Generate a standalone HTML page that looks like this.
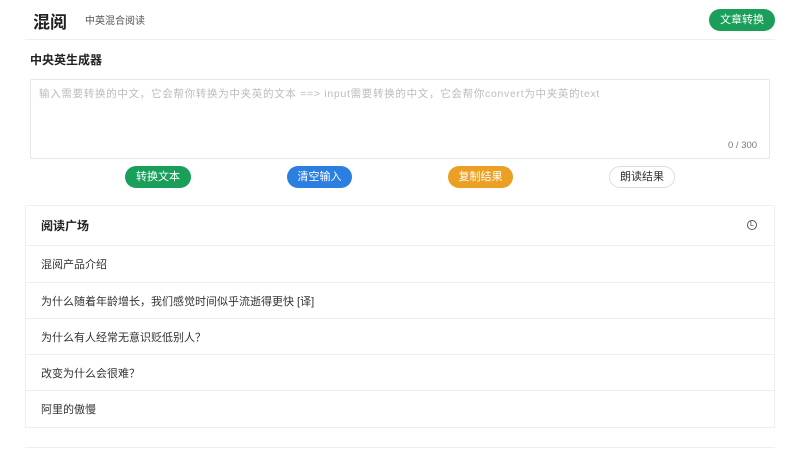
<!DOCTYPE html>
<html><head><meta charset="utf-8"><style>
*{margin:0;padding:0;box-sizing:border-box}
body{width:800px;height:450px;overflow:hidden;background:#fff;font-family:"Liberation Sans","Noto Sans CJK SC",sans-serif;color:#333;position:relative}
.a{position:absolute}
.btn{position:absolute;height:22px;border-radius:11px;color:#fff;font-size:11px;line-height:22px;text-align:center}
.row{position:absolute;left:25px;width:750px;border-top:1px solid #eee;font-size:11px;padding-left:16px;display:flex;align-items:center}
</style></head><body>
<div class="a" style="left:33px;top:8px;font-size:17px;font-weight:bold;color:#222">混阅</div>
<div class="a" style="left:85px;top:12px;font-size:10px;color:#555">中英混合阅读</div>
<div class="btn" style="left:709px;top:9px;width:66px;background:#1a9f5a">文章转换</div>
<div class="a" style="left:25px;top:39px;width:750px;height:1px;background:#eee"></div>
<div class="a" style="left:30px;top:51px;font-size:12px;font-weight:bold;color:#222">中央英生成器</div>
<div class="a" style="left:30px;top:79px;width:740px;height:80px;border:1px solid #e6e6e6;border-radius:2px"></div>
<div class="a" style="left:39px;top:86px;font-size:10.5px;color:#bbb;letter-spacing:0.7px;white-space:nowrap">输入需要转换的中文，它会帮你转换为中夹英的文本 ==&gt; input需要转换的中文，它会帮你convert为中夹英的text</div>
<div class="a" style="left:728px;top:140px;font-size:9.5px;color:#777">0 / 300</div>
<div class="btn" style="left:125px;top:166px;width:66px;background:#1a9f5a">转换文本</div>
<div class="btn" style="left:287px;top:166px;width:65px;background:#2a7fe0">清空输入</div>
<div class="btn" style="left:448px;top:166px;width:65px;background:#eba024">复制结果</div>
<div class="btn" style="left:609px;top:166px;width:66px;background:#fff;border:1px solid #ddd;color:#333;line-height:20px">朗读结果</div>
<div class="a" style="left:25px;top:205px;width:750px;height:223px;border:1px solid #eee"></div>
<div class="a" style="left:41px;top:217px;font-size:12px;font-weight:bold;color:#222">阅读广场</div>
<div class="a" style="left:747px;top:220px;width:10px;height:10px;border:1px solid #555;border-radius:50%;font-size:7px;line-height:8px;text-align:center">L</div>
<div class="row" style="top:245px;height:37px">混阅产品介绍</div>
<div class="row" style="top:282px;height:36px">为什么随着年龄增长，我们感觉时间似乎流逝得更快 [译]</div>
<div class="row" style="top:318px;height:36px">为什么有人经常无意识贬低别人？</div>
<div class="row" style="top:354px;height:36px">改变为什么会很难？</div>
<div class="row" style="top:390px;height:37px">阿里的傲慢</div>
<div class="a" style="left:25px;top:447px;width:750px;height:1px;background:#eee"></div>
</body></html>
